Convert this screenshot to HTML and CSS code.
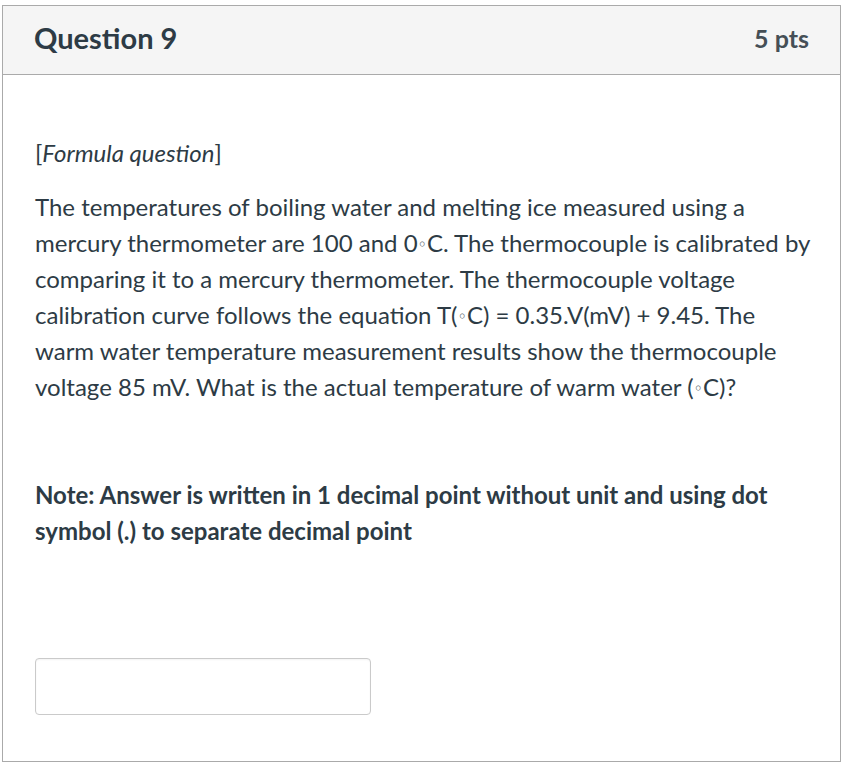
FILE: index.html
```html
<!DOCTYPE html>
<html>
<head>
<meta charset="utf-8">
<link rel="stylesheet" href="styles.css">
</head>
<body>
<div class="card">
  <div class="header">
    <div class="title">Question 9</div>
    <div class="pts">5 pts</div>
  </div>
  <div class="content">
    <p class="p">[<em>Formula question</em>]</p>
    <p class="p">The temperatures of boiling water and melting ice measured using a mercury thermometer are 100 and 0<span class="deg">◦</span>C. The thermocouple is calibrated by comparing it to a mercury thermometer. The thermocouple voltage calibration curve follows the equation T(<span class="deg">◦</span>C) = 0.35.V(mV) + 9.45. The warm water temperature measurement results show the thermocouple voltage 85 mV. What is the actual temperature of warm water (<span class="deg">◦</span>C)?</p>
    <p class="p note"><strong>Note: Answer is written in 1 decimal point without unit and using dot symbol (.) to separate decimal point</strong></p>
    <div class="answer"><input class="input" type="text"></div>
  </div>
</div>
</body>
</html>
```
FILE: styles.css
```css
html, body {
  margin: 0;
  padding: 0;
  background: #fff;
}
body {
  font-family: Lato, "Noto Sans", sans-serif;
  color: #2d3b45;
}
.card {
  margin: 5px 0 0 2px;
  width: 837px;
  height: 755px;
  border: 1px solid #aaaaaa;
}
.header {
  display: flex;
  justify-content: space-between;
  align-items: center;
  box-sizing: border-box;
  height: 69px;
  background: #f5f5f5;
  border-bottom: 1px solid #aaaaaa;
  padding: 0 31px 5px 31px;
}
.title {
  font-size: 29px;
  font-weight: 700;
}
.pts {
  font-size: 25px;
  font-weight: 700;
  color: #454f56;
}
.content {
  padding: 60px 26px 0 32px;
}
.p {
  margin: 0 0 18px 0;
  font-size: 24px;
  line-height: 36px;
}
.deg {
  font-family: "DejaVu Sans", sans-serif;
  font-size: 16px;
  line-height: 1;
  vertical-align: 2px;
}
.note {
  margin-top: 72px;
}
.answer {
  margin-top: 109px;
}
.input {
  display: block;
  box-sizing: border-box;
  width: 336px;
  height: 57px;
  border: 1px solid #cacaca;
  border-radius: 4px;
  margin: 0;
  padding: 0 10px;
  font-size: 22px;
  outline: none;
  box-shadow: inset 0 1px 2px rgba(0,0,0,0.05);
}
```
